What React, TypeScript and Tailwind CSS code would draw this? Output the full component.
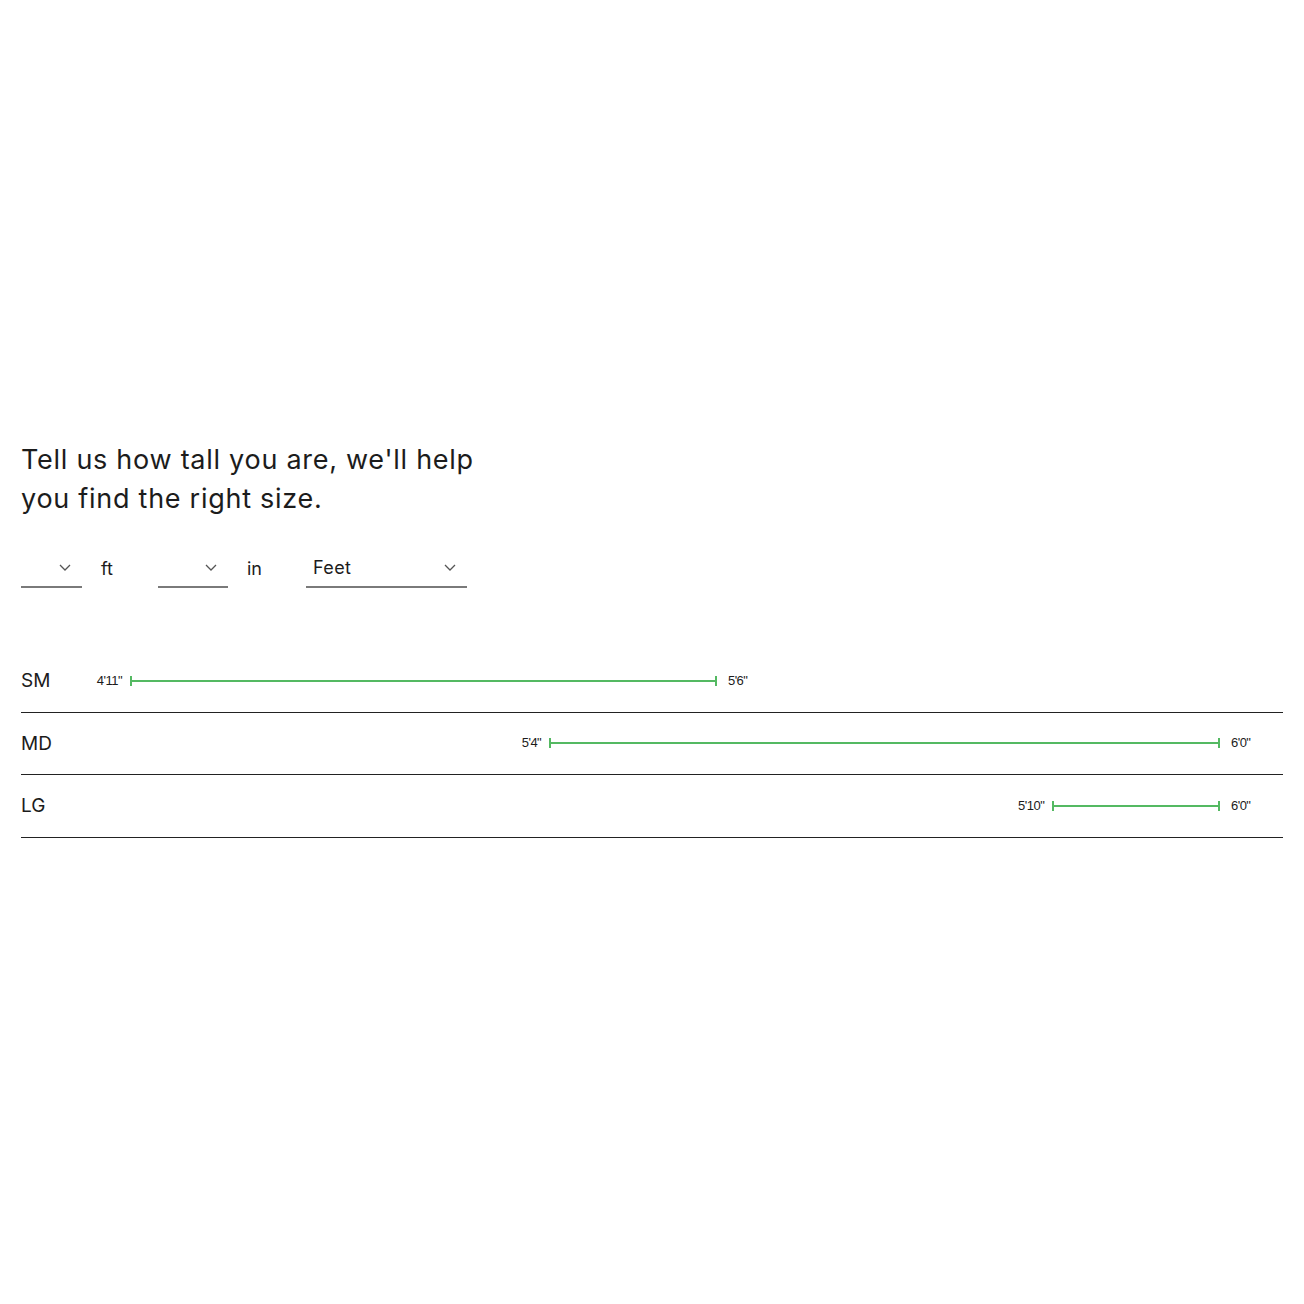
import React from 'react';

interface SizeRow {
  label: string;
  min: number;
  max: number;
}

const SIZES: SizeRow[] = [
  { label: 'SM', min: 59, max: 66 },
  { label: 'MD', min: 64, max: 72 },
  { label: 'LG', min: 70, max: 72 },
];

const RANGE_MIN = 59;
const RANGE_MAX = 72;

const fmt = (inches: number) => `${Math.floor(inches / 12)}'${inches % 12}"`;

function Chevron() {
  return (
    <svg width="12" height="7" viewBox="0 0 12 7" fill="none" stroke="#555" strokeWidth={1.3}>
      <path d="M1 1l5 5 5-5" />
    </svg>
  );
}

function Select({ width, value }: { width: string; value?: string }) {
  return (
    <div className={`${width} h-10 flex items-center justify-between border-b-2 border-[#7a7a7a] pl-[7px] pr-[11px]`}>
      <span className="text-[18px] tracking-[0.02em] text-[#1c1c1c]">{value}</span>
      <Chevron />
    </div>
  );
}

export default function App() {
  return (
    <div className="min-h-[1304px] bg-white px-[21px] pt-[440px] text-[#1c1c1c]" style={{ fontFamily: 'Inter, "Noto Sans", sans-serif' }}>
      {/* Heading */}
      <h1 className="max-w-[480px] text-[27px] leading-[39px] tracking-[0.027em] font-normal">
        Tell us how tall you are, we'll help you find the right size.
      </h1>

      {/* Inputs */}
      <div className="flex items-center mt-[30px]">
        <Select width="w-[61px]" />
        <span className="text-[18px] ml-[19px] w-[57px]">ft</span>
        <Select width="w-[70px]" />
        <span className="text-[18px] ml-[19px] w-[59px]">in</span>
        <Select width="w-[161px]" value="Feet" />
      </div>

      {/* Size chart */}
      <div className="mt-[62px]">
        {SIZES.map((s) => {
          const left = ((s.min - RANGE_MIN) / (RANGE_MAX - RANGE_MIN)) * 100;
          const width = ((s.max - s.min) / (RANGE_MAX - RANGE_MIN)) * 100;
          return (
            <div key={s.label} className="flex items-center h-[62.5px] border-b border-[#222]">
              <div className="w-[109px] text-[19px] pt-[1px]">{s.label}</div>
              <div className="relative flex-1 mr-[63px] h-3">
                <div className="absolute top-0 h-3" style={{ left: `${left}%`, width: `${width}%` }}>
                  <span
                    className="absolute right-full mr-[8px] top-1/2 -translate-y-1/2 text-[13px] tracking-[-0.04em] whitespace-nowrap"
                    style={{ fontFamily: '"Liberation Sans", Arial, sans-serif' }}
                  >
                    {fmt(s.min)}
                  </span>
                  <div className="absolute left-0 right-0 top-1/2 -translate-y-1/2 h-[2px] bg-[#54b962]" />
                  <div className="absolute left-0 top-[1px] w-[2px] h-[10px] bg-[#54b962]" />
                  <div className="absolute right-0 top-[1px] w-[2px] h-[10px] bg-[#54b962]" />
                  <span
                    className="absolute left-full ml-[11px] top-1/2 -translate-y-1/2 text-[13px] tracking-[-0.04em] whitespace-nowrap"
                    style={{ fontFamily: '"Liberation Sans", Arial, sans-serif' }}
                  >
                    {fmt(s.max)}
                  </span>
                </div>
              </div>
            </div>
          );
        })}
      </div>
    </div>
  );
}
